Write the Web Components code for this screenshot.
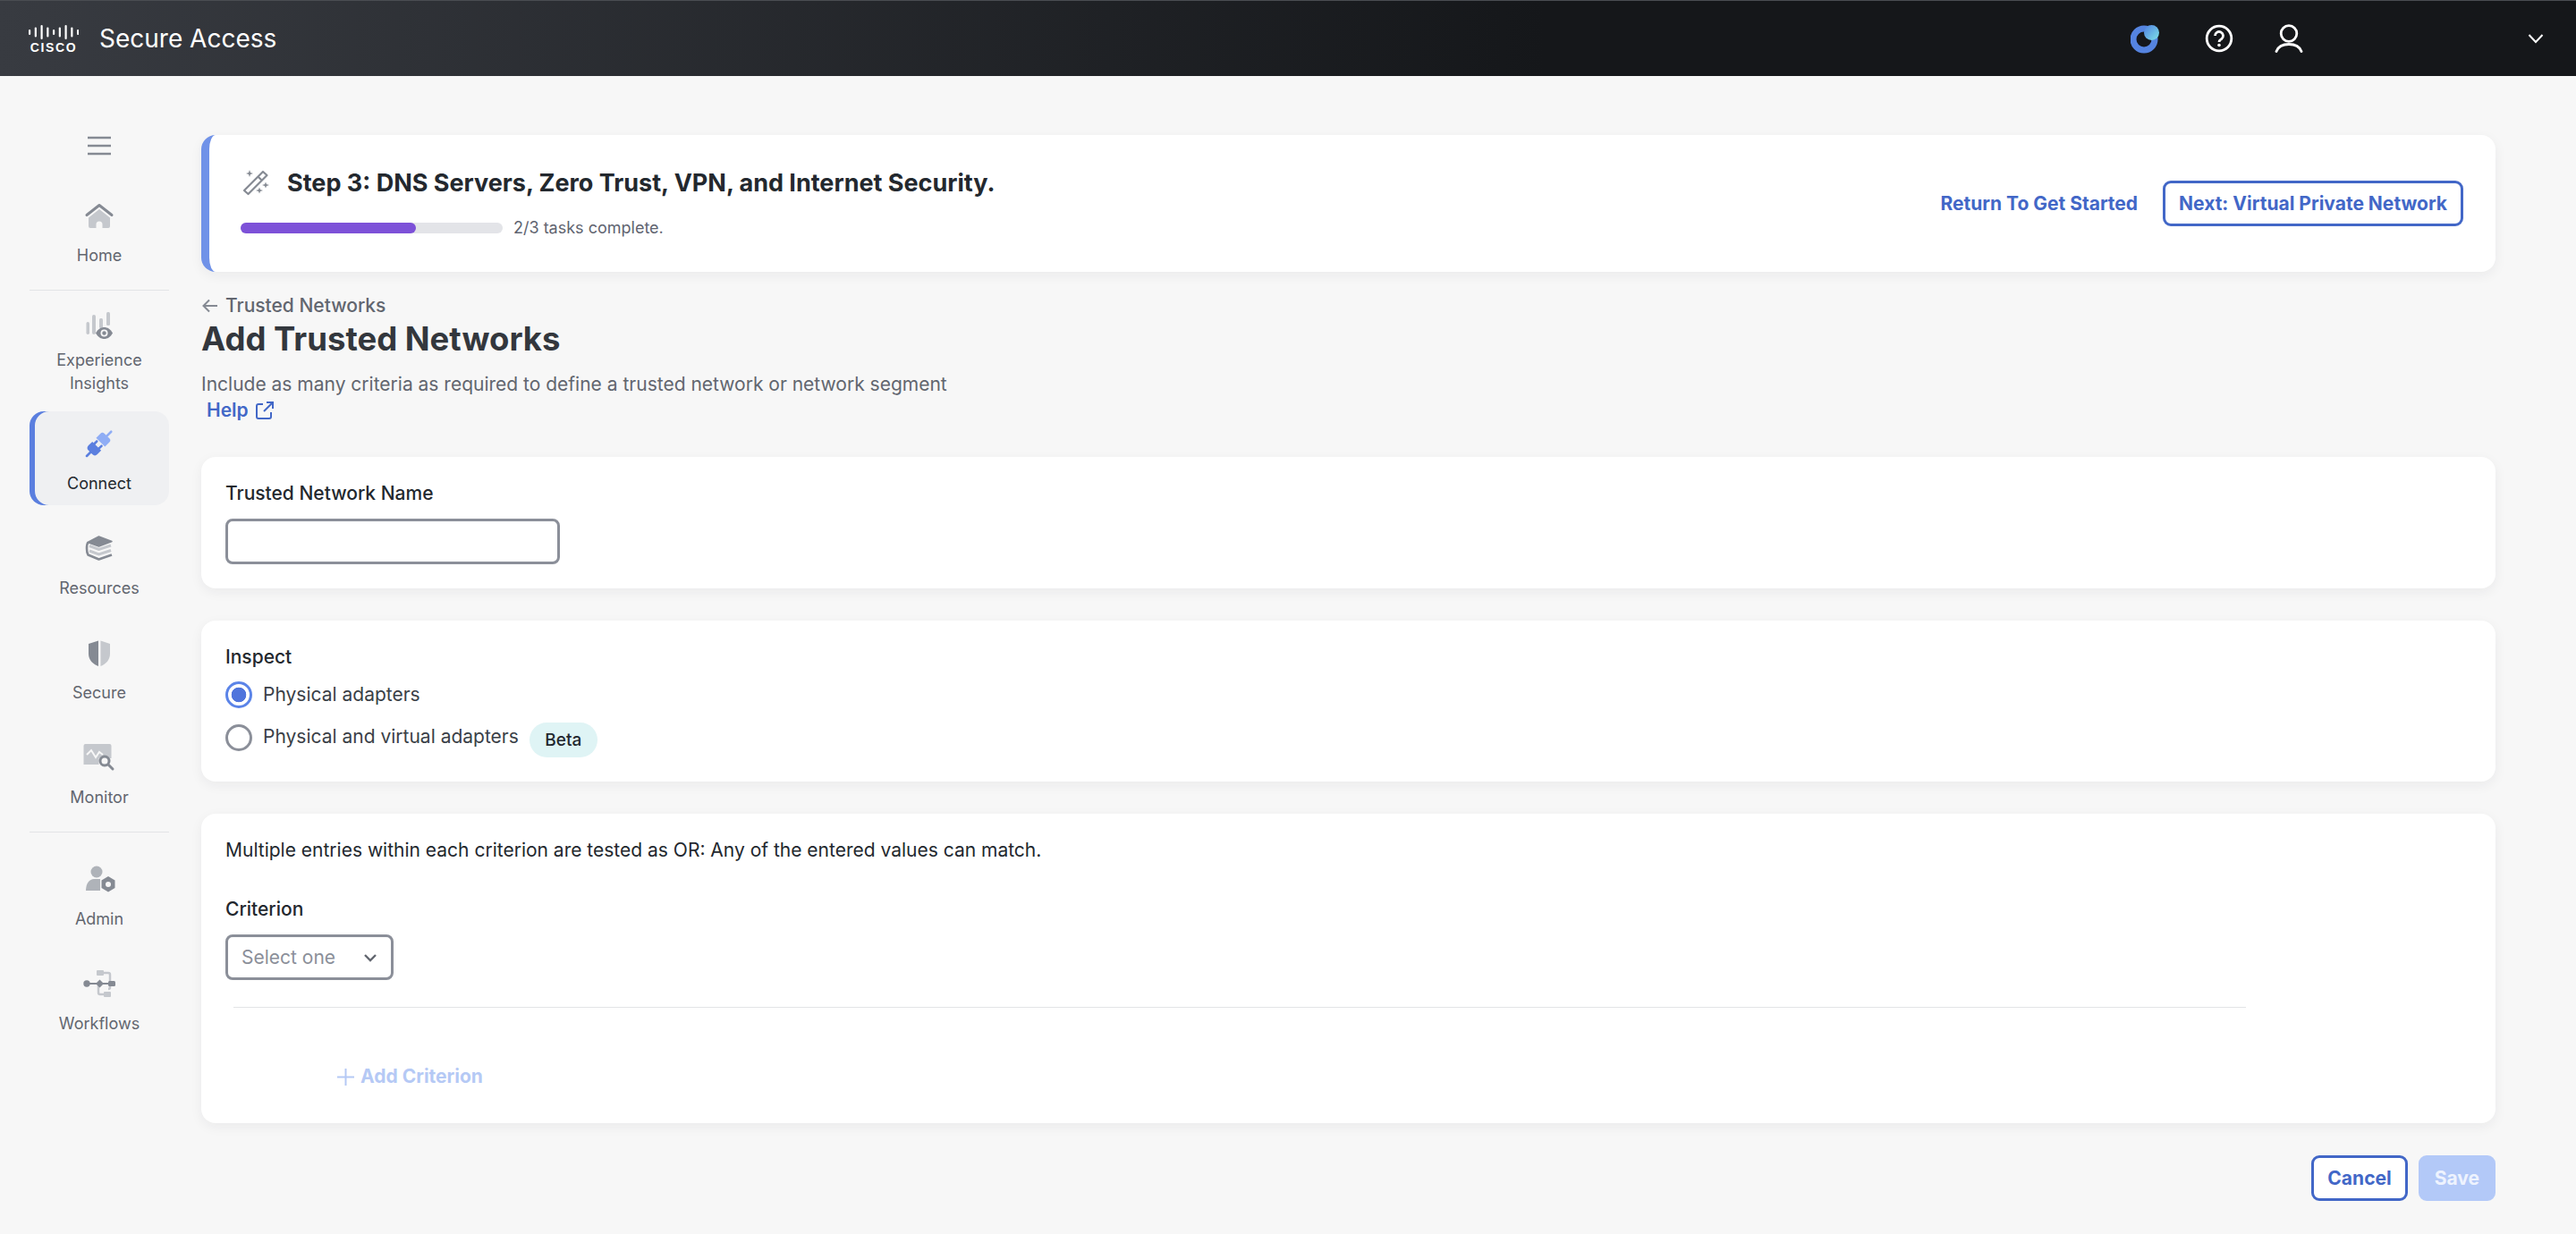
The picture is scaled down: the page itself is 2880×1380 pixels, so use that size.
<!DOCTYPE html>
<html>
<head>
<meta charset="utf-8">
<title>Secure Access</title>
<style>
  html, body { margin: 0; height: 100%; background: #f7f7f7; overflow: hidden; }
  body { font-family: Inter, "Noto Sans", sans-serif; color: #23282e; }
</style>
</head>
<body>
<sa-app></sa-app>
<script>
const DARK = '#858a93';
const LIGHT = '#c5c8cd';

const ICONS = {
  home: `<path d="M4 17.500 18 6.500l14 11" fill="none" stroke="${DARK}" stroke-width="3" stroke-linecap="round" stroke-linejoin="round"/>
    <path d="M18 11 30 20.500V30a2 2 0 0 1-2 2h-6.500v-4a3.500 3.500 0 0 0-7 0v4H8a2 2 0 0 1-2-2v-9.500z" fill="${LIGHT}"/>`,
  insights: `<g fill="${LIGHT}"><rect x="3.500" y="14" width="3.500" height="14" rx="1.700"/><rect x="10" y="6" width="4" height="22" rx="2"/><rect x="18" y="10" width="4" height="11" rx="1.500"/><rect x="26" y="3" width="4" height="15" rx="1.500"/></g>
    <path d="M14 26.500C16.500 22 20 20 23.500 20s7 2 9.500 6.500C30.500 31 27 33 23.500 33S16.500 31 14 26.500z" fill="${DARK}"/>
    <circle cx="23.500" cy="26.500" r="4" fill="#f7f7f7"/><circle cx="23.500" cy="26.500" r="2.200" fill="${DARK}"/>`,
  connect: `<g transform="translate(18 18) rotate(45)">
      <g fill="#8fadf5"><path d="M-7-3h14v-7a3 3 0 0 0-3-3h-8a3 3 0 0 0-3 3z" transform="translate(0 1)"/><rect x="-1.300" y="-20" width="2.600" height="9" rx="1.200"/></g>
      <g fill="#5b7fdf"><path d="M-7 3h14v6a4 4 0 0 1-4 4h-6a4 4 0 0 1-4-4z" transform="translate(0 1)"/><rect x="-1.300" y="13" width="2.600" height="8" rx="1.200"/><rect x="-5" y="-1" width="2.600" height="6" rx="1"/><rect x="2.400" y="-1" width="2.600" height="6" rx="1"/></g>
    </g>`,
  resources: `<path d="M7 15.500 17.500 19.500 31 15M7 21 17.500 25 31 20.500" fill="none" stroke="${LIGHT}" stroke-width="3"/>
    <path d="M17.500 5 32 10.500 17.500 16 5 11.500z" fill="${DARK}" stroke="${DARK}" stroke-width="1.500" stroke-linejoin="round"/>
    <path d="M5.500 11.500C3.500 14 3.500 22.500 5.500 25.500L17.500 30.500 32 25.500" fill="none" stroke="${DARK}" stroke-width="2.600" stroke-linejoin="round"/>`,
  secure: `<path d="M17 4.500 6 8v11c0 7 4.500 11.500 11 14z" fill="${DARK}"/><path d="M19.500 4.500 30 8v11c0 7-4.500 11.500-10.500 14z" fill="${LIGHT}"/>`,
  monitor: `<path d="M5.500 5h25a2 2 0 0 1 2 2v14h-14v7h-17V7a2 2 0 0 1 2-2z" fill="${LIGHT}" transform="translate(-1 -2)"/>
    <path d="M4 15l5-5 5 8 4-6 4 3" fill="none" stroke="#f7f7f7" stroke-width="2"/>
    <circle cx="24" cy="22" r="5" fill="#f7f7f7" stroke="${DARK}" stroke-width="3"/><path d="M28 26l5 5" stroke="${DARK}" stroke-width="3" stroke-linecap="round"/>`,
  admin: `<circle cx="15" cy="10" r="6.500" fill="#afb3b9"/><path d="M3 31c0-8 4-13 9-13h7v13z" fill="#afb3b9"/>
    <path d="M28 15l7.500 4.500v8.500L28 32.500 20.500 28v-8.500z" fill="${DARK}"/><circle cx="28" cy="24" r="3" fill="#f7f7f7"/>`,
  workflows: `<path d="M19 6h9a2 2 0 0 1 2 2v14a2 2 0 0 1-2 2M17 18v10a2 2 0 0 0 2 2h7" fill="none" stroke="${LIGHT}" stroke-width="2.500"/>
    <rect x="15" y="3" width="8" height="6" rx="1" fill="${LIGHT}"/><rect x="23" y="27" width="8" height="6" rx="1" fill="${LIGHT}"/>
    <path d="M7 18h25" stroke="${DARK}" stroke-width="2"/><circle cx="4" cy="18" r="3.700" fill="${DARK}"/>
    <path d="M18.500 13.500l4.500 4.500-4.500 4.500L14 18z" fill="${DARK}"/><rect x="28" y="15" width="8" height="6" rx="1.500" fill="${DARK}"/>`,
  wand: `<g fill="${DARK}"><path d="M10 3l1 3 3 1-3 1-1 3-1-3-3-1 3-1zM28 16.500l1 2.500 3 1-3 1-1 2.500-1-2.500-3-1 3-1zM21 22.500l1 2.500 3 1-3 1-1 2.500-1-2.500-3-1 3-1z"/></g>
    <path d="M4 26 25 5l4.500 4L8.500 30z M19.500 10.500l4.500 4.500" fill="none" stroke="${DARK}" stroke-width="2.200" stroke-linejoin="round"/>`
};

class SaIcon extends HTMLElement {
  connectedCallback() {
    this.attachShadow({ mode: 'open' });
    const size = this.getAttribute('size') || 36;
    this.shadowRoot.innerHTML = `
      <style>:host { display: block; width: ${size}px; height: ${size}px; } svg { display: block; overflow: visible; }</style>
      <svg width="${size}" height="${size}" viewBox="0 0 36 36">${ICONS[this.getAttribute('name')]}</svg>`;
  }
}

class SaHeader extends HTMLElement {
  connectedCallback() {
    this.attachShadow({ mode: 'open' });
    // bar heights of the cisco mark, left to right
    const bars = [6, 11, 16, 11, 6, 11, 16, 11, 6].map((h, i) =>
      `<rect x="${i * 6.750}" y="${8 - h / 2}" width="2.200" height="${h}" rx="1.100" fill="#fff"/>`).join('');
    this.shadowRoot.innerHTML = `
      <style>
        :host { display: flex; align-items: center; height: 85px; box-sizing: border-box; border-top: 1px solid #4a4d52;
          background: linear-gradient(90deg, #383b41 0%, #15171a 60%, #15171a 100%); color: #fff; padding-left: 32px; }
        .logo { display: flex; flex-direction: column; align-items: center; width: 56px; }
        .logo span { font: 700 14px/12px "Liberation Sans", sans-serif; letter-spacing: 1.600px; margin-top: 3px; }
        .name { font: 400 28px/36px Inter, sans-serif; margin-left: 23px; }
        .right { margin-left: auto; display: flex; align-items: center; }
        svg { display: block; }
      </style>
      <div class="logo"><svg width="56" height="16" viewBox="0 0 56 16">${bars}</svg><span>CISCO</span></div>
      <div class="name">Secure Access</div>
      <div class="right">
        <svg width="34" height="34" viewBox="0 0 34 34" style="margin-right:49px">
          <defs><linearGradient id="g" x1="0" y1="0" x2="1" y2="1"><stop offset="0" stop-color="#4f7fe0"/><stop offset="1" stop-color="#7fe3e8"/></linearGradient></defs>
          <circle cx="15" cy="18" r="12" fill="none" stroke="#5584e0" stroke-width="7"/>
          <circle cx="23.500" cy="10.500" r="8.500" fill="url(#g)"/>
        </svg>
        <svg width="32" height="32" viewBox="0 0 32 32" style="margin-right:46px">
          <circle cx="16" cy="16" r="13.800" fill="none" stroke="#fff" stroke-width="2.800"/>
          <path d="M11.500 13a4.500 4.500 0 1 1 7.200 3.600c-1.600 1.200-2.700 1.800-2.700 3.400" fill="none" stroke="#fff" stroke-width="2.800"/>
          <circle cx="16" cy="23.500" r="1.800" fill="#fff"/>
        </svg>
        <svg width="32" height="32" viewBox="0 0 32 32" style="margin-right:251px">
          <circle cx="16" cy="10.500" r="8.800" fill="none" stroke="#fff" stroke-width="2.800"/>
          <path d="M2 30.500C4 25 9 22.500 16 22.500s12 2.500 14 8" fill="none" stroke="#fff" stroke-width="2.800" stroke-linecap="round"/>
        </svg>
        <svg width="18" height="12" viewBox="0 0 18 12" style="margin-right:36px">
          <path d="M1.500 2 9 10l7.500-8" fill="none" stroke="#fff" stroke-width="2"/>
        </svg>
      </div>`;
  }
}

class SaNavItem extends HTMLElement {
  connectedCallback() {
    this.attachShadow({ mode: 'open' });
    this.shadowRoot.innerHTML = `
      <style>
        :host { display: flex; flex-direction: column; align-items: center; width: 156px; box-sizing: border-box;
          font: 400 18px/26px Inter, sans-serif; color: #62666f; text-align: center; }
        :host([active]) { background: #eff0f2; border-radius: 16px; padding: 18px 0 13px; color: #23282e;
          box-shadow: inset 6px 0 0 #5b7fdf; }
        .label { margin: 14px 0 -2px; }
        :host([compact]) .label { margin-top: 8px; }
      </style>
      <sa-icon name="${this.getAttribute('icon')}"></sa-icon>
      <div class="label"><slot></slot></div>`;
  }
}

class SaNav extends HTMLElement {
  connectedCallback() {
    this.attachShadow({ mode: 'open' });
    this.shadowRoot.innerHTML = `
      <style>
        :host { display: flex; flex-direction: column; width: 192px; padding: 60px 0 0 33px; box-sizing: border-box; flex: none; }
        .burger { width: 156px; height: 36px; display: flex; align-items: center; justify-content: center; margin-bottom: 42px; }
        hr { width: 156px; height: 1px; margin: 0; border: 0; background: #e3e4e6; }
        svg { display: block; }
      </style>
      <div class="burger"><svg width="28" height="22" viewBox="0 0 28 22"><path d="M1 2h26M1 11h26M1 20h26" stroke="#858a93" stroke-width="2.400"/></svg></div>
      <sa-nav-item icon="home">Home</sa-nav-item>
      <hr style="margin-top:27px">
      <sa-nav-item icon="insights" compact style="margin-top:21px">Experience<br>Insights</sa-nav-item>
      <sa-nav-item icon="connect" active style="margin-top:20px">Connect</sa-nav-item>
      <sa-nav-item icon="resources" style="margin-top:30px">Resources</sa-nav-item>
      <sa-nav-item icon="secure" style="margin-top:43px">Secure</sa-nav-item>
      <sa-nav-item icon="monitor" style="margin-top:43px">Monitor</sa-nav-item>
      <hr style="margin-top:27px">
      <sa-nav-item icon="admin" style="margin-top:34px">Admin</sa-nav-item>
      <sa-nav-item icon="workflows" style="margin-top:43px">Workflows</sa-nav-item>`;
  }
}

class SaCard extends HTMLElement {
  connectedCallback() {
    this.attachShadow({ mode: 'open' });
    this.shadowRoot.innerHTML = `
      <style>
        :host { display: block; background: #fff; border-radius: 16px; box-sizing: border-box; padding: 27px;
          box-shadow: 0 4px 14px rgba(30, 35, 45, .06); font: 400 21px/28px Inter, sans-serif; color: #23282e; }
      </style>
      <slot></slot>`;
  }
}

class SaButton extends HTMLElement {
  connectedCallback() {
    this.attachShadow({ mode: 'open' });
    this.shadowRoot.innerHTML = `
      <style>
        :host { display: inline-flex; align-items: center; justify-content: center; height: 51px; box-sizing: border-box;
          padding: 0 15px; border-radius: 9px; border: 3px solid #4267c7; background: #fff; color: #4267c7;
          font: 700 21px/28px Inter, sans-serif; }
        :host([disabled]) { background: #b3c9f8; border-color: #b3c9f8; color: #eef3fe; }
      </style>
      <slot></slot>`;
  }
}

class SaRadio extends HTMLElement {
  connectedCallback() {
    this.attachShadow({ mode: 'open' });
    this.shadowRoot.innerHTML = `
      <style>
        :host { display: flex; align-items: center; font: 400 21px/28px Inter, sans-serif; color: #3a3f47; }
        .dot { width: 30px; height: 30px; box-sizing: border-box; border-radius: 50%; border: 3px solid #8b8f99; background: #fff; margin-right: 12px; flex: none; }
        :host([checked]) .dot { border-color: #5b84e8; background: radial-gradient(circle, #4f74dc 0 8px, #fff 8.600px); }
      </style>
      <div class="dot"></div><slot></slot>`;
  }
}

class SaBanner extends HTMLElement {
  connectedCallback() {
    this.attachShadow({ mode: 'open' });
    this.shadowRoot.innerHTML = `
      <style>
        :host { display: flex; align-items: center; height: 153px; box-sizing: border-box; flex: none;
          background: #fff; border-radius: 16px; border-left: 9px solid #7092e8; padding: 0 36px 0 35px;
          box-shadow: 0 4px 14px rgba(30, 35, 45, .06); }
        .left { flex: 1; }
        .title { display: flex; align-items: center; margin-top: -2px; font: 700 27px/36px Inter, sans-serif; color: #23282e; }
        .title sa-icon { margin-right: 16px; }
        .progress { display: flex; align-items: center; margin-top: 20px; font: 400 18px/24px Inter, sans-serif; color: #5f6470; }
        .track { width: 293px; height: 12px; border-radius: 6px; background: #e3e4e8; margin-right: 12px; }
        .fill { width: 196px; height: 12px; border-radius: 6px; background: #7d51d8; }
        .link { font: 700 21px/28px Inter, sans-serif; color: #4267c7; margin-right: 28px; }
      </style>
      <div class="left">
        <div class="title"><sa-icon name="wand"></sa-icon>Step 3: DNS Servers, Zero Trust, VPN, and Internet Security.</div>
        <div class="progress"><div class="track"><div class="fill"></div></div>2/3 tasks complete.</div>
      </div>
      <div class="link">Return To Get Started</div>
      <sa-button>Next: Virtual Private Network</sa-button>`;
  }
}

class SaApp extends HTMLElement {
  connectedCallback() {
    this.attachShadow({ mode: 'open' });
    this.shadowRoot.innerHTML = `
      <style>
        :host { display: flex; flex-direction: column; height: 100vh; overflow: hidden; font-family: Inter, sans-serif; }
        .body { display: flex; flex: 1; min-height: 0; }
        main { flex: 1; display: flex; flex-direction: column; padding: 66px 90px 0 33px; min-width: 0; }
        .crumb { display: flex; align-items: center; margin-top: 24px; font: 550 21px/28px Inter, sans-serif; color: #62666f; }
        .crumb svg { margin-right: 7px; }
        h1 { margin: 1px 0 0; font: 700 36.500px/44px Inter, sans-serif; color: #33373d; }
        .desc { margin-top: 15px; font: 400 21px/28px Inter, sans-serif; color: #62666f; }
        .help { display: flex; align-items: center; margin: 1px 0 38px 6px; font: 600 21px/28px Inter, sans-serif; color: #4267c7; }
        .help svg { margin-left: 7px; }
        sa-card + sa-card { margin-top: 36px; }
        .lbl { font-weight: 550; }
        .input { width: 374px; height: 51px; box-sizing: border-box; border: 3px solid #8b8f99; border-radius: 8px; margin-top: 14px; }
        .r1 { margin-top: 13px; }
        .r2 { margin-top: 18px; align-items: flex-start; }
        .beta { display: inline-flex; align-items: center; justify-content: center; width: 76px; height: 39px; margin: -2px 0 0 12px;
          border-radius: 20px; background: #dff4f5; font: 500 19px/24px Inter, sans-serif; color: #23282e; }
        .select { display: flex; align-items: center; justify-content: space-between; width: 188px; height: 51px; box-sizing: border-box;
          border: 3px solid #8b8f99; border-radius: 8px; margin-top: 14px; padding: 0 15px; color: #8b8f99; }
        .rule { height: 1px; background: #e3e4e6; margin: 30px 0 0 9px; width: 2250px; }
        .add { display: flex; align-items: center; margin: 63px 0 11px 125px; font-weight: 700; color: #b5c9f5; }
        .add svg { margin-right: 7px; }
        .actions { display: flex; justify-content: flex-end; margin-top: 36px; gap: 12px; }
      </style>
      <sa-header></sa-header>
      <div class="body">
        <sa-nav></sa-nav>
        <main>
          <sa-banner></sa-banner>
          <div class="crumb"><svg width="20" height="18" viewBox="0 0 20 18"><path d="M18 9H3M9 2.500 2.500 9 9 15.500" fill="none" stroke="#858a93" stroke-width="2"/></svg>Trusted Networks</div>
          <h1>Add Trusted Networks</h1>
          <div class="desc">Include as many criteria as required to define a trusted network or network segment</div>
          <div class="help">Help<svg width="22" height="22" viewBox="0 0 22 22"><path d="M9 4H4a2 2 0 0 0-2 2v12a2 2 0 0 0 2 2h12a2 2 0 0 0 2-2v-5M13 2h7v7M20 2 10 12" fill="none" stroke="#4267c7" stroke-width="2"/></svg></div>
          <sa-card>
            <div class="lbl">Trusted Network Name</div>
            <div class="input"></div>
          </sa-card>
          <sa-card>
            <div class="lbl">Inspect</div>
            <sa-radio class="r1" checked>Physical adapters</sa-radio>
            <sa-radio class="r2">Physical and virtual adapters<span class="beta">Beta</span></sa-radio>
          </sa-card>
          <sa-card>
            <div>Multiple entries within each criterion are tested as OR: Any of the entered values can match.</div>
            <div class="lbl" style="margin-top:38px">Criterion</div>
            <div class="select">Select one<svg width="16" height="10" viewBox="0 0 16 10"><path d="M2 2l6 6 6-6" fill="none" stroke="#62666f" stroke-width="2.400"/></svg></div>
            <div class="rule"></div>
            <div class="add"><svg width="19" height="19" viewBox="0 0 19 19"><path d="M9.500 0v19M0 9.500h19" stroke="#b5c9f5" stroke-width="2"/></svg>Add Criterion</div>
          </sa-card>
          <div class="actions"><sa-button>Cancel</sa-button><sa-button disabled>Save</sa-button></div>
        </main>
      </div>`;
  }
}

customElements.define('sa-icon', SaIcon);
customElements.define('sa-header', SaHeader);
customElements.define('sa-nav-item', SaNavItem);
customElements.define('sa-nav', SaNav);
customElements.define('sa-card', SaCard);
customElements.define('sa-button', SaButton);
customElements.define('sa-radio', SaRadio);
customElements.define('sa-banner', SaBanner);
customElements.define('sa-app', SaApp);
</script>
</body>
</html>
